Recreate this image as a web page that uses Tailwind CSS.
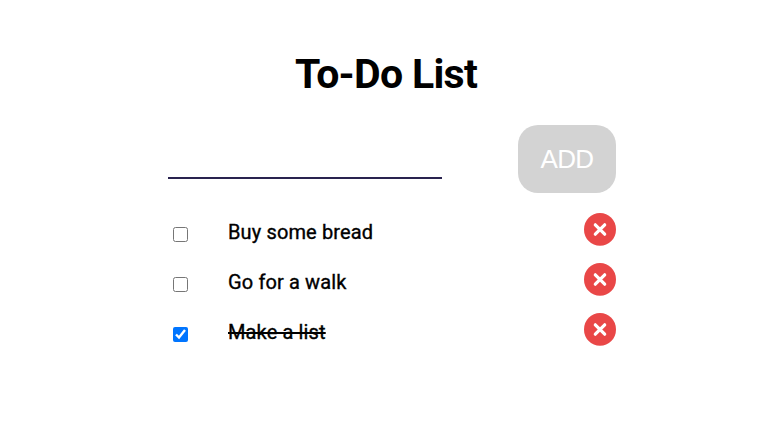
<!DOCTYPE html>
<html lang="en"><head><meta charset="utf-8"><title>To-Do List</title>
<script src="https://cdn.jsdelivr.net/npm/@tailwindcss/browser@4"></script></head>
<body class="bg-white text-black font-[Roboto,sans-serif]">
<main class="ml-[168px] w-[448px] pt-[50px]">
<h1 class="-ml-[12px] text-center text-[41px] leading-[49px] font-bold tracking-[-0.7px]">To-Do List</h1>
<form class="mt-[26px] flex h-[68px] justify-between">
<input type="text" aria-label="New task" class="h-[54px] w-[274px] border-b-2 border-[#29234f] outline-none">
<button type="button" class="h-[68px] w-[98px] rounded-[20px] bg-[#d3d3d3] font-['Liberation_Sans',sans-serif] text-[26px] tracking-[-0.6px] text-white">ADD</button>
</form>
<ul class="mt-[14px] text-[20px] font-normal tracking-[0.13px] [-webkit-text-stroke:0.35px_black]">
<li class="flex h-[50px] items-center"><input type="checkbox" class="ml-[5px] mt-[5px] size-[15px]"><span class="ml-10 flex-1">Buy some bread</span><button aria-label="Delete"><svg class="mt-[-6px] h-[33px] w-8" viewBox="0 0 32 33"><ellipse cx="16" cy="16.4" rx="16" ry="16.4" fill="#e94747"/><path d="M11.3 11.8L20.7 21.2M20.7 11.8L11.3 21.2" stroke="white" stroke-width="3.2" stroke-linecap="round"/></svg></button></li>
<li class="flex h-[50px] items-center"><input type="checkbox" class="ml-[5px] mt-[5px] size-[15px]"><span class="ml-10 flex-1">Go for a walk</span><button aria-label="Delete"><svg class="mt-[-6px] h-[33px] w-8" viewBox="0 0 32 33"><ellipse cx="16" cy="16.4" rx="16" ry="16.4" fill="#e94747"/><path d="M11.3 11.8L20.7 21.2M20.7 11.8L11.3 21.2" stroke="white" stroke-width="3.2" stroke-linecap="round"/></svg></button></li>
<li class="flex h-[50px] items-center"><input type="checkbox" checked class="ml-[5px] mt-[5px] size-[15px]"><span class="ml-10 flex-1"><span class="line-through decoration-2">Make a list</span></span><button aria-label="Delete"><svg class="mt-[-6px] h-[33px] w-8" viewBox="0 0 32 33"><ellipse cx="16" cy="16.4" rx="16" ry="16.4" fill="#e94747"/><path d="M11.3 11.8L20.7 21.2M20.7 11.8L11.3 21.2" stroke="white" stroke-width="3.2" stroke-linecap="round"/></svg></button></li>
</ul></main></body></html>
